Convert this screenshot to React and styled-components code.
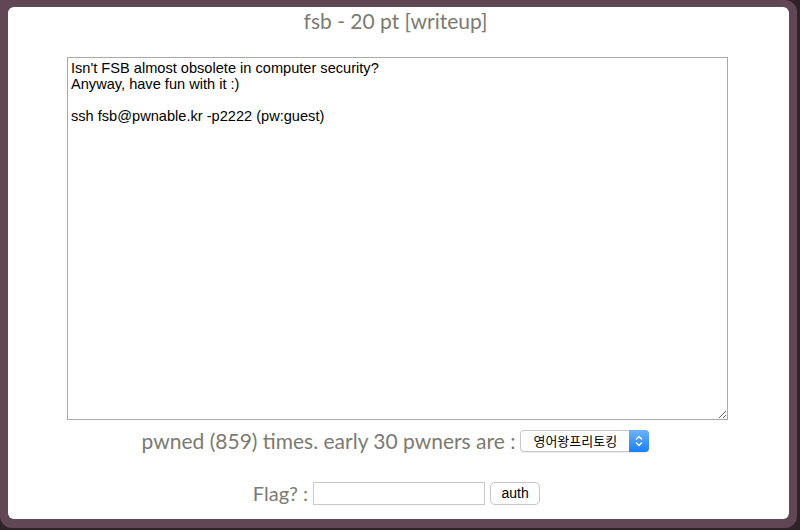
import React, { useState } from "react";
import styled, { createGlobalStyle } from "styled-components";

const GlobalStyle = createGlobalStyle`
  html, body {
    margin: 0;
    padding: 0;
    background: #2f2229;
  }
  #root {
    width: 800px;
    height: 530px;
    overflow: hidden;
  }
`;

const StyledFrame = styled.div`
  box-sizing: border-box;
  width: 797px;
  height: 528px;
  padding: 7px 8px 9px 8px;
  background: #614656;
  border-radius: 0 12px 12px 12px;
`;

const StyledPanel = styled.div`
  box-sizing: border-box;
  height: 100%;
  background: #ffffff;
  border-radius: 6px;
  display: flex;
  flex-direction: column;
  align-items: center;
  font-family: Lato, "Liberation Sans", sans-serif;
  color: #7b7a73;
`;

const StyledTitle = styled.div`
  font-size: 21px;
  height: 28px;
  line-height: 28px;
  margin-left: -6px;
`;

const StyledDesc = styled.textarea`
  box-sizing: border-box;
  width: 661px;
  height: 363px;
  margin-top: 22px;
  margin-left: -2px;
  padding: 2px 3px;
  border: 1px solid #a9a9a9;
  font-family: "Liberation Sans", Arial, sans-serif;
  font-size: 14.6px;
  line-height: 16px;
  color: #000;
  resize: both;
  outline: none;
`;

const StyledRow = styled.div`
  display: flex;
  align-items: center;
  font-size: ${(p) => p.$size}px;
  margin-top: ${(p) => p.$top}px;
  margin-left: ${(p) => p.$left}px;
`;

const StyledLabel = styled.span`
  margin-right: 5px;
`;

const StyledSelect = styled.div`
  position: relative;
  box-sizing: border-box;
  width: 129px;
  height: 22px;
  border: 1px solid #c8c8c8;
  border-radius: 4px;
  background: #fff;
  font-family: "Noto Sans CJK KR", sans-serif;
  font-size: 13px;
  color: #000;
  display: flex;
  align-items: center;
  padding-left: 12px;
  box-shadow: 0 1px 1px rgba(0, 0, 0, 0.08);
`;

const StyledStepper = styled.div`
  position: absolute;
  right: -1px;
  top: -1px;
  width: 20px;
  height: 22px;
  border-radius: 0 4px 4px 0;
  background: linear-gradient(#6cb3fa, #1a7ef5);
  display: flex;
  align-items: center;
  justify-content: center;
`;

const StyledInput = styled.input`
  box-sizing: border-box;
  width: 172px;
  height: 23px;
  border: 1px solid #c9c9c9;
  padding: 2px 4px;
  font-size: 13px;
  outline: none;
`;

const StyledButton = styled.button`
  box-sizing: border-box;
  width: 50px;
  height: 23px;
  margin-left: 5px;
  border: 1px solid #c6c6c6;
  border-radius: 5px;
  background: #fff;
  font-family: "Liberation Sans", Arial, sans-serif;
  font-size: 14px;
  color: #000;
  padding: 0;
`;

const DESC = `Isn't FSB almost obsolete in computer security?
Anyway, have fun with it :)

ssh fsb@pwnable.kr -p2222 (pw:guest)`;

const App = () => {
  const [flag, setFlag] = useState("");

  return (
    <>
      <GlobalStyle />
      <StyledFrame>
        <StyledPanel>
          <StyledTitle>fsb - 20 pt [writeup]</StyledTitle>
          <StyledDesc readOnly value={DESC} />
          <StyledRow $size={21} $top={8} $left={-6}>
            <StyledLabel>pwned (859) times. early 30 pwners are :</StyledLabel>
            <StyledSelect>
              영어왕프리토킹
              <StyledStepper>
                <svg width="8" height="12" viewBox="0 0 8 12">
                  <path
                    d="M1 4.5 L4 1.5 L7 4.5 M1 7.5 L4 10.5 L7 7.5"
                    fill="none"
                    stroke="#fff"
                    strokeWidth="1.4"
                  />
                </svg>
              </StyledStepper>
            </StyledSelect>
          </StyledRow>
          <StyledRow $size={20} $top={28} $left={-4}>
            <StyledLabel>Flag? :</StyledLabel>
            <StyledInput value={flag} onChange={(e) => setFlag(e.target.value)} />
            <StyledButton>auth</StyledButton>
          </StyledRow>
        </StyledPanel>
      </StyledFrame>
    </>
  );
};

export default App;
